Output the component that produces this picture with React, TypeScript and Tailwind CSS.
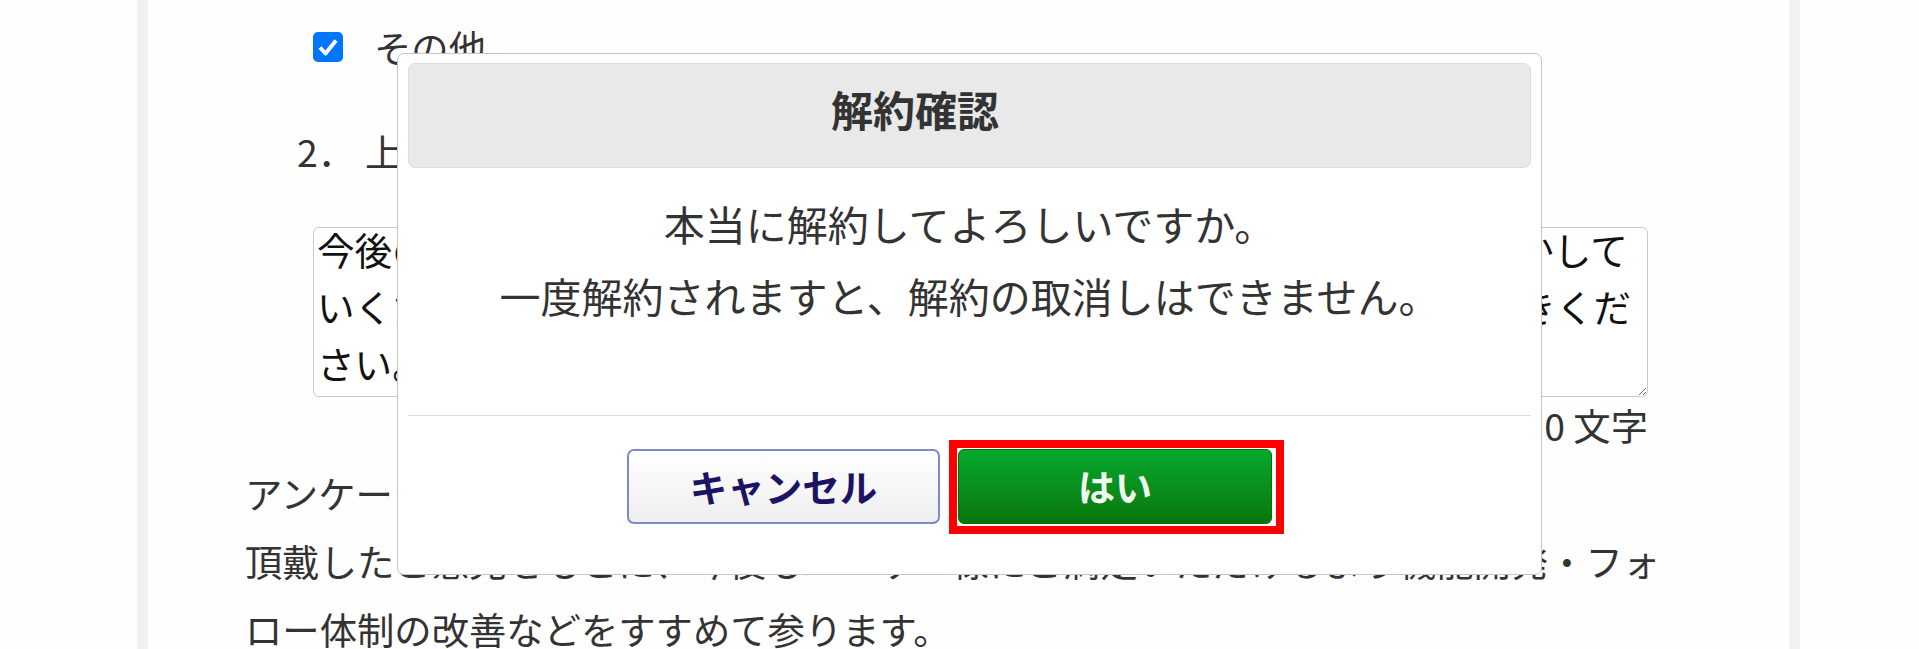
import React from "react";

const textareaText = [
  "今後のサービス改善の参考とさせていただき、より良い製品作りにも活かして",
  "いくため、解約理由やご意見・ご要望などございましたらご自由にお書きくだ",
  "さい。",
].join("\n");

export default function App() {
  return (
    <div className="relative h-[649px] overflow-hidden bg-[#fefefe] text-[#333] font-[family-name:'Noto_Sans_CJK_JP','Noto_Sans',sans-serif]">
      {/* page column with grey side rails */}
      <div className="ml-[137px] flex h-full w-[1663px] flex-col border-x-[11px] border-[#f1f1f1] pl-[97px] text-[37.33px]">
        {/* checkbox row */}
        <div className="ml-[68px] mt-[19px] flex h-[56px] shrink-0 items-center leading-[56px]">
          <span className="flex h-[30px] w-[30px] shrink-0 items-center justify-center rounded-[5px] bg-[#0075ff]">
            <svg width="26" height="26" viewBox="0 0 26 26" fill="none">
              <path d="M5 13.5 L10.5 19.5 L21 6.5" stroke="#fff" strokeWidth="4" strokeLinejoin="round" />
            </svg>
          </span>
          <span className="ml-[31px]">その他</span>
        </div>

        {/* question 2 */}
        <div className="ml-[52px] mt-[48px] h-[56px] shrink-0 whitespace-nowrap leading-[56px]">
          <span className="mr-[10px]">2．</span>
          上記以外のご意見・ご要望がございましたら、ご記入ください。
        </div>

        {/* textarea */}
        <div className="ml-[68px] mt-[48px] h-[170px] w-[1335px] shrink-0 overflow-hidden rounded-[6px] border border-[#cccccc] bg-white">
          <textarea
            readOnly
            defaultValue={textareaText}
            className="-mt-[8px] block h-[176px] w-full overflow-hidden border-0 bg-transparent pl-[3px] pr-0 pt-0 text-[37.6px] leading-[57px] text-[#111] outline-none"
          />
        </div>

        {/* counter */}
        <div className="ml-[68px] w-[1335px] shrink-0 text-right leading-[56px]">0 文字</div>

        {/* closing paragraph */}
        <div className="mt-[6px] shrink-0 whitespace-nowrap leading-[68px]">
          <p>アンケートにご協力いただき、誠にありがとうございました。</p>
          <p>
            頂戴したご意見をもとに、今後もユーザー様にご満足いただけるよう機能開発・フォ
            <br />
            ロー体制の改善などをすすめて参ります。
          </p>
        </div>
      </div>

      {/* confirmation dialog */}
      <div className="absolute left-[397px] top-[53px] flex h-[522px] w-[1145px] flex-col rounded-[7px] border border-[#c5c5c5] bg-white px-[10px] pt-[9px]">
        <div className="h-[105px] shrink-0 rounded-[7px] border border-[#dddddd] bg-[#e9e9e9] px-[16px] pt-[20px]">
          <div className="w-[90%] text-center text-[42px] font-bold leading-[50px] text-[#333]">解約確認</div>
        </div>
        <div className="h-[247px] shrink-0 pt-[19px] text-center text-[41px] leading-[72px] text-[#333]">
          <p>本当に解約してよろしいですか。</p>
          <p>一度解約されますと、解約の取消しはできません。</p>
        </div>
        <div className="flex shrink-0 gap-[18px] border-t border-[#dddddd] pl-[219px] pt-[33px]">
          <button className="flex h-[75px] w-[313px] items-center justify-center rounded-[7px] border-2 border-[#7d89cb] bg-gradient-to-b from-white to-[#eeeeee] text-[37.5px] font-bold text-[#1b1464]">
            キャンセル
          </button>
          <button className="flex h-[75px] w-[314px] items-center justify-center rounded-[6px] border border-[#0b6e0b] bg-gradient-to-b from-[#05a92d] to-[#0a760a] text-[37px] font-bold text-[#f2fbf2]">
            はい
          </button>
        </div>
      </div>

      {/* red highlight frame */}
      <div className="pointer-events-none absolute left-[949px] top-[440px] h-[94px] w-[335px] border-[8px] border-[#ff0000]" />
    </div>
  );
}
